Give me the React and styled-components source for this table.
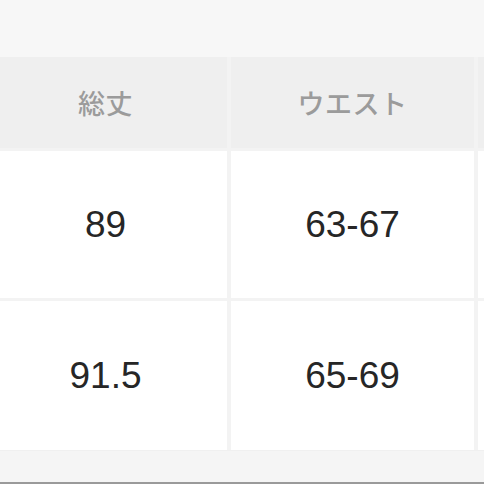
import React from "react";
import styled, { createGlobalStyle } from "styled-components";

const Global = createGlobalStyle`
  html, body { margin: 0; padding: 0; background: #f7f7f7; }
  body { font-family: "Liberation Sans", "Noto Sans CJK JP", sans-serif; }
`;

const Page = styled.div`
  width: 484px;
  height: 484px;
  overflow: hidden;
  display: flex;
  flex-direction: column;
  background: #f7f7f7;
  box-sizing: border-box;
  border-bottom: 2px solid #9a9a9a;
`;

const Spacer = styled.div`
  height: 57px;
  flex: none;
`;

const Table = styled.div`
  display: grid;
  grid-template-columns: repeat(3, 243px);
  grid-template-rows: 91px 147px 149px;
  column-gap: 4px;
  row-gap: 3px;
  margin-left: -16px;
  background: #f3f3f3;
  flex: none;
`;

const HeadCell = styled.div`
  background: #efefef;
  display: flex;
  align-items: center;
  justify-content: center;
  color: #9b9b9b;
  font-family: "Noto Sans CJK JP", sans-serif;
  font-weight: 500;
  font-size: 27px;
  letter-spacing: 0.5px;
`;

const Cell = styled.div`
  background: #ffffff;
  display: flex;
  align-items: center;
  justify-content: center;
  color: #262626;
  font-family: "Liberation Sans", sans-serif;
  font-size: 37px;
`;

const Footer = styled.div`
  flex: 1;
  background: #f5f5f5;
  border-top: 1px solid #f0f0f0;
`;

const headers = ["総丈", "ウエスト", ""];
const rows = [
  ["89", "63-67", ""],
  ["91.5", "65-69", ""],
];

export default function App() {
  return (
    <>
      <Global />
      <Page>
        <Spacer />
        <Table>
          {headers.map((h, i) => (
            <HeadCell key={i}>{h}</HeadCell>
          ))}
          {rows.map((r, i) =>
            r.map((v, j) => <Cell key={`${i}-${j}`}>{v}</Cell>)
          )}
        </Table>
        <Footer />
      </Page>
    </>
  );
}
